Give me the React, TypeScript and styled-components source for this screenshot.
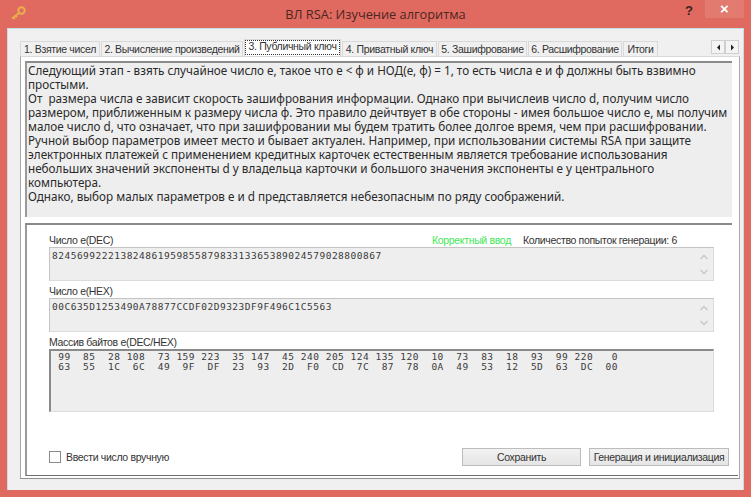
import React from "react";
import styled, { createGlobalStyle } from "styled-components";

const GlobalStyle = createGlobalStyle`
  html, body {
    margin: 0;
    padding: 0;
    background: #e06a60;
  }
`;

const Window = styled.div`
  width: 751px;
  height: 497px;
  box-sizing: border-box;
  background: #e06a60;
  padding: 0 7px 7px;
  display: flex;
  flex-direction: column;
  overflow: hidden;
  font-family: "Liberation Sans", Arial, sans-serif;
  color: #222;
`;

const TitleBar = styled.div`
  height: 28px;
  flex: none;
  position: relative;
  display: flex;
  align-items: center;
  justify-content: center;
`;

const Title = styled.div`
  font-family: "Open Sans", sans-serif;
  font-size: 12.8px;
  color: #4c2622;
`;

const KeyIcon = styled.svg`
  position: absolute;
  left: 2px;
  top: 6px;
`;

const HelpButton = styled.div`
  position: absolute;
  right: 51px;
  top: 1px;
  font: bold 13px "Liberation Sans", sans-serif;
  color: #3d2320;
  line-height: 20px;
`;

const CloseButton = styled.div`
  position: absolute;
  right: 0;
  top: 0;
  width: 39px;
  height: 18px;
  background: #e27a6f;
  color: #fff;
  font: bold 15px/17px "Liberation Sans", sans-serif;
  text-align: center;
`;

const Client = styled.div`
  flex: 1;
  background: #f0f0f0;
  border: 1px solid #c5dde4;
  border-bottom: none;
  padding: 10px 3px 11px 12px;
  display: flex;
  flex-direction: column;
`;

const TabRow = styled.div`
  display: flex;
  align-items: flex-end;
  height: 17px;
  flex: none;
  position: relative;
  z-index: 1;
`;

const Tab = styled.div<{ $w: number; $active?: boolean }>`
  width: ${(p) => p.$w}px;
  height: ${(p) => (p.$active ? 17 : 15)}px;
  box-sizing: border-box;
  margin-right: 1px;
  background: ${(p) => (p.$active ? "#fff" : "#f0f0f0")};
  border: 1px solid #d9d9d9;
  border-bottom: none;
  font-size: 10.5px;
  letter-spacing: -0.33px;
  line-height: ${(p) => (p.$active ? 13 : 14)}px;
  text-align: center;
  white-space: nowrap;
  color: #333;
  ${(p) => p.$active && "outline: 1px dotted #333; outline-offset: -2px;"}
`;

const Scroller = styled.div`
  margin-left: auto;
  margin-bottom: 2px;
  display: flex;
  margin-right: 1px;
`;

const ScrollButton = styled.div`
  width: 14px;
  height: 14px;
  box-sizing: border-box;
  background: #f4f4f4;
  border: 1px solid #cfcfcf;
  display: flex;
  align-items: center;
  justify-content: center;
`;

const TabPane = styled.div`
  flex: 1;
  background: #fff;
  border: 1px solid #a8a8a8;
  border-top-color: #d9d9d9;
  border-bottom-color: #8f8f8f;
  padding: 4px 1px 2px 4px;
  display: flex;
  flex-direction: column;
  gap: 6px;
`;

const InfoPanel = styled.div`
  height: 156px;
  flex: none;
  box-sizing: border-box;
  margin-right: 6px;
  background: #eeeeee;
  border-top: 2px solid #8a8a8a;
  border-left: 2px solid #9a9a9a;
  padding: 0 0 0 1px;
  font-family: "Noto Sans", sans-serif;
  font-size: 11.7px;
  line-height: 14px;
  white-space: pre-wrap;
  color: #2a2a2a;
`;

const WorkPanel = styled.div`
  flex: 1;
  position: relative;
  background: #fff;
  border-left: 2px solid #9a9a9a;
  border-bottom: 1px solid #6f6f6f;
  padding: 9px 9px 9px 22px;
  display: flex;
  flex-direction: column;
  &::before {
    content: "";
    position: absolute;
    left: -2px;
    right: 6px;
    top: 0;
    height: 2px;
    background: #8a8a8a;
  }
`;

const LabelRow = styled.div`
  height: 15px;
  display: flex;
  align-items: center;
  font-size: 10.5px;
  letter-spacing: -0.33px;
  color: #333;
`;

const Status = styled.span`
  margin-left: auto;
  color: #3fe85a;
`;

const Attempts = styled.span`
  margin-left: 12px;
  margin-right: 52px;
`;

const FieldBox = styled.div<{ $h: number; $strong?: boolean }>`
  position: relative;
  width: 665px;
  height: ${(p) => p.$h}px;
  box-sizing: border-box;
  flex: none;
  background: #eeeeee;
  border-top: ${(p) => (p.$strong ? "2px solid #8a8a8a" : "1px solid #c4c4c4")};
  border-left: ${(p) => (p.$strong ? "2px solid #8a8a8a" : "1px solid #c4c4c4")};
  border-bottom: 1px solid #dcdcdc;
  border-right: 1px solid #dcdcdc;
  padding: ${(p) => (p.$strong ? "1px 0 0 1px" : "2px 0 0 2px")};
  margin-bottom: 2px;
  font-family: "DejaVu Sans Mono", monospace;
  font-size: 9.5px;
  line-height: ${(p) => (p.$strong ? 9.5 : 11)}px;
  letter-spacing: 0.5px;
  color: #3a3a3a;
  white-space: pre;
`;

const Spinner = styled.div`
  position: absolute;
  right: 3px;
  top: 0;
  bottom: 0;
  display: flex;
  flex-direction: column;
  justify-content: center;
  gap: 9px;
`;

const BottomRow = styled.div`
  margin-top: auto;
  display: flex;
  align-items: center;
  height: 18px;
  font-size: 10.5px;
  letter-spacing: -0.33px;
  color: #333;
`;

const CheckBox = styled.div`
  width: 12px;
  height: 12px;
  box-sizing: border-box;
  background: #fff;
  border: 1px solid #8a8a8a;
  margin-right: 5px;
`;

const ButtonGroup = styled.div`
  margin-left: auto;
  display: flex;
  gap: 8px;
`;

const Button = styled.div<{ $w: number }>`
  width: ${(p) => p.$w}px;
  height: 18px;
  box-sizing: border-box;
  background: linear-gradient(#f2f2f2, #e5e5e5);
  border: 1px solid #bcbcbc;
  line-height: 16px;
  text-align: center;
  white-space: nowrap;
`;

const tabs: { label: string; w: number; active?: boolean }[] = [
  { label: "1. Взятие чисел", w: 80 },
  { label: "2. Вычисление произведений", w: 142 },
  { label: "3. Публичный ключ", w: 97, active: true },
  { label: "4. Приватный ключ", w: 95 },
  { label: "5. Зашифрование", w: 89 },
  { label: "6. Расшифрование", w: 94 },
  { label: "Итоги", w: 35 },
];

const infoText = `Следующий этап - взять случайное число е, такое что е < φ и НОД(е, φ) = 1, то есть числа е и φ должны быть взвимно
простыми.
От  размера числа е зависит скорость зашифрования информации. Однако при вычислеив число d, получим число
размером, приближенным к размеру числа φ. Это правило дейчтвует в обе стороны - имея большое число е, мы получим
малое число d, что означает, что при зашифровании мы будем тратить более долгое время, чем при расшифровании.
Ручной выбор параметров имеет место и бывает актуален. Например, при использовании системы RSA при защите
электронных платежей с применением кредитных карточек естественным является требование использования
небольших значений экспоненты d у владельца карточки и большого значения экспоненты е у центрального
компьютера.
Однако, выбор малых параметров е и d представляется небезопасным по ряду соображений.`;

const bytes = ` 99  85  28 108  73 159 223  35 147  45 240 205 124 135 120  10  73  83  18  93  99 220   0
 63  55  1C  6C  49  9F  DF  23  93  2D  F0  CD  7C  87  78  0A  49  53  12  5D  63  DC  00`;

const Chevrons = () => (
  <Spinner>
    <svg width="12" height="6" viewBox="0 0 12 6">
      <path d="M2.5 5 L6 1.5 L9.5 5" fill="none" stroke="#c2c8cc" strokeWidth="1.4" />
    </svg>
    <svg width="12" height="6" viewBox="0 0 12 6">
      <path d="M2.5 1 L6 4.5 L9.5 1" fill="none" stroke="#c2c8cc" strokeWidth="1.4" />
    </svg>
  </Spinner>
);

export default function App() {
  return (
    <Window>
      <GlobalStyle />
      <TitleBar>
        <KeyIcon width="18" height="14" viewBox="0 0 18 14">
          <circle cx="12.5" cy="4.5" r="3.2" fill="none" stroke="#e8b04a" strokeWidth="2" />
          <path d="M10 7 L3 12.5 M4.5 11.3 L6 13 M6.5 9.7 L8 11.2" stroke="#e8b04a" strokeWidth="1.8" fill="none" />
        </KeyIcon>
        <Title>ВЛ RSA: Изучение алгоритма</Title>
        <HelpButton>?</HelpButton>
        <CloseButton>×</CloseButton>
      </TitleBar>
      <Client>
        <TabRow>
          {tabs.map((t) => (
            <Tab key={t.label} $w={t.w} $active={t.active}>
              {t.label}
            </Tab>
          ))}
          <Scroller>
            <ScrollButton>
              <svg width="5" height="7" viewBox="0 0 5 7">
                <path d="M4 0.5 L1 3.5 L4 6.5 Z" fill="#222" />
              </svg>
            </ScrollButton>
            <ScrollButton>
              <svg width="5" height="7" viewBox="0 0 5 7">
                <path d="M1 0.5 L4 3.5 L1 6.5 Z" fill="#222" />
              </svg>
            </ScrollButton>
          </Scroller>
        </TabRow>
        <TabPane>
          <InfoPanel>{infoText}</InfoPanel>
          <WorkPanel>
            <LabelRow>
              Число е(DEC)
              <Status>Корректный ввод</Status>
              <Attempts>Количество попыток генерации: 6</Attempts>
            </LabelRow>
            <FieldBox $h={34}>
              82456992221382486195985587983313365389024579028800867
              <Chevrons />
            </FieldBox>
            <LabelRow>Число е(HEX)</LabelRow>
            <FieldBox $h={34}>
              00C635D1253490A78877CCDF02D9323DF9F496C1C5563
              <Chevrons />
            </FieldBox>
            <LabelRow>Массив байтов е(DEC/HEX)</LabelRow>
            <FieldBox $h={63} $strong>
              {bytes}
            </FieldBox>
            <BottomRow>
              <CheckBox />
              Ввести число вручную
              <ButtonGroup>
                <Button $w={119}>Сохранить</Button>
                <Button $w={140}>Генерация и инициализация</Button>
              </ButtonGroup>
            </BottomRow>
          </WorkPanel>
        </TabPane>
      </Client>
    </Window>
  );
}
